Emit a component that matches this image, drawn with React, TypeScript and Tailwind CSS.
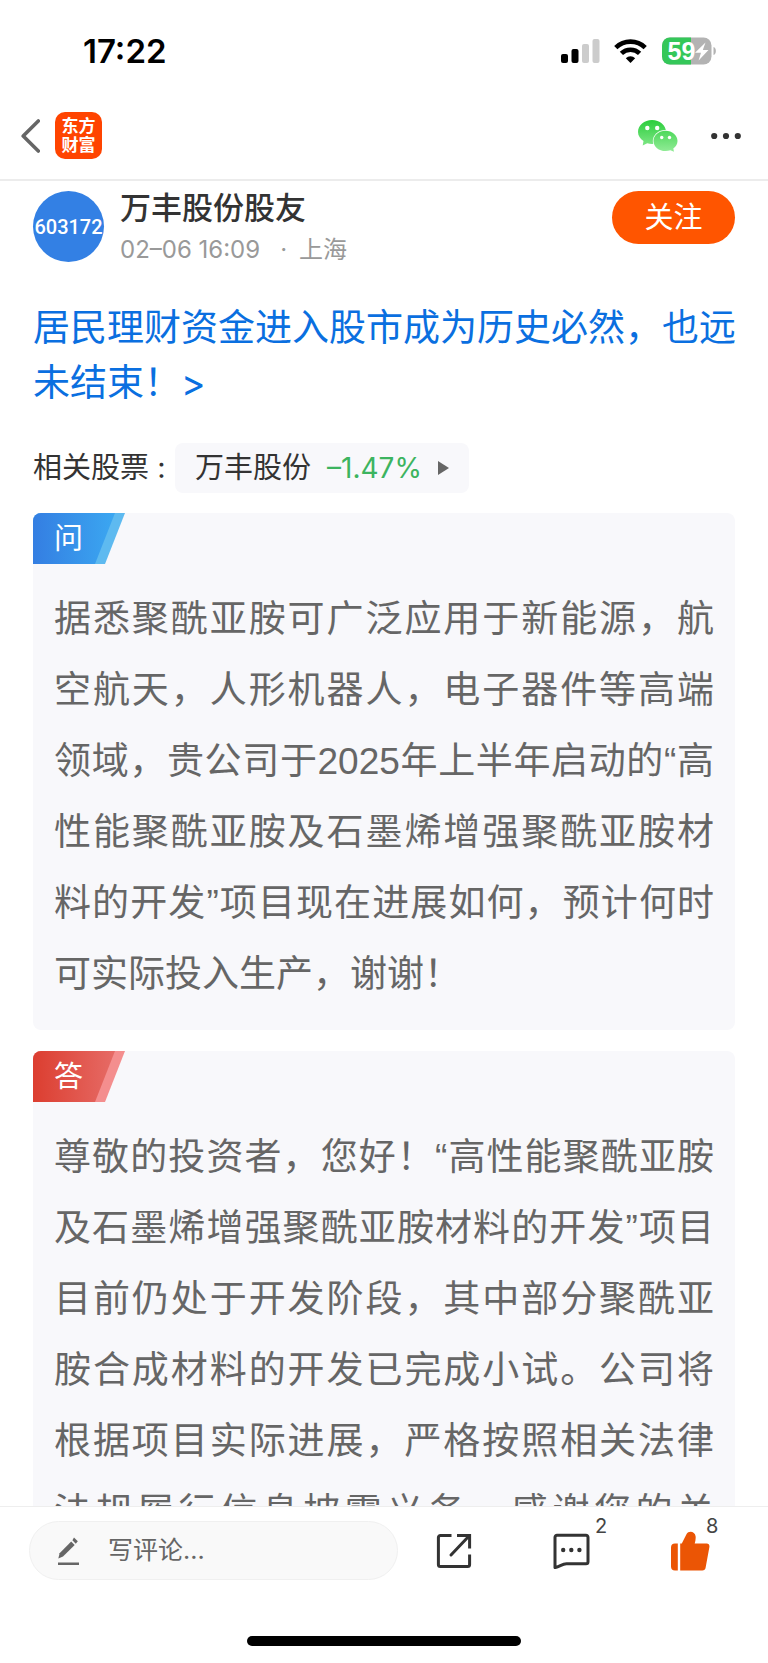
interface QaCardProps {
  tag: string;
  kind: "question" | "answer";
  text: string;
}

const question =
  "据悉聚酰亚胺可广泛应用于新能源，航空航天，人形机器人，电子器件等高端领域，贵公司于2025年上半年启动的“高性能聚酰亚胺及石墨烯增强聚酰亚胺材料的开发”项目现在进展如何，预计何时可实际投入生产，谢谢！";

const answer =
  "尊敬的投资者，您好！“高性能聚酰亚胺及石墨烯增强聚酰亚胺材料的开发”项目目前仍处于开发阶段，其中部分聚酰亚胺合成材料的开发已完成小试。公司将根据项目实际进展，严格按照相关法律法规履行信息披露义务。感谢您的关注！";

function StatusBar() {
  return (
    <div className="flex h-[92px] items-center justify-between pt-[10px] pr-[51px] pl-[83px]">
      <span className="text-[33px] leading-none font-semibold text-black">17:22</span>
      <div className="flex items-center">
        <svg className="h-6 w-[39px]" viewBox="0 0 39 24" aria-hidden="true">
          <rect x="0" y="15" width="7" height="9" rx="2" fill="#000" />
          <rect x="10.5" y="10" width="7" height="14" rx="2" fill="#000" />
          <rect x="21" y="5" width="7" height="19" rx="2" fill="#ccc" />
          <rect x="31.5" y="0" width="7" height="24" rx="2" fill="#ccc" />
        </svg>
        <svg className="ml-[14px] h-6 w-[33px]" viewBox="0 0 33 24" aria-hidden="true">
          <g fill="none" stroke="#000" strokeWidth="4.6">
            <path d="M1.8 8.6a21 21 0 0 1 29.4 0" />
            <path d="M7.4 14.4a13 13 0 0 1 18.2 0" />
          </g>
          <path d="M11.8 19.2a6.8 6.8 0 0 1 9.4 0L16.5 24z" fill="#000" />
        </svg>
        <svg className="ml-[15px] h-7 w-[55px]" viewBox="0 0 55 28" aria-label="59%">
          <defs>
            <clipPath id="battery">
              <rect y="0.5" width="49.5" height="27" rx="8" />
            </clipPath>
          </defs>
          <g clipPath="url(#battery)">
            <rect width="50" height="28" fill="#b3b3b3" />
            <rect width="29" height="28" fill="#34c759" />
          </g>
          <path d="M51.5 10c3.2 1 3.2 7 0 8z" fill="#b3b3b3" />
          <text x="5.5" y="23" fontSize="25" fontWeight="700" fill="#fff" fontFamily="Liberation Sans">
            59
          </text>
          <path d="M43.5 5.5 33 15.7h6l-2.4 7.8 9.9-10.4h-5.7z" fill="#fff" />
        </svg>
      </div>
    </div>
  );
}

function NavBar() {
  return (
    <header className="flex h-[89px] items-center border-b-2 border-[#ececec] pr-[27px] pl-[21px]">
      <button type="button" aria-label="返回">
        <svg className="h-[34px] w-[19px]" viewBox="0 0 19 34" fill="none" aria-hidden="true">
          <path d="M17.3 2 2.2 17l15.1 15" stroke="#666" strokeWidth="3.6" strokeLinecap="round" strokeLinejoin="round" />
        </svg>
      </button>
      <a
        href="#"
        className="ml-[15px] flex h-[47px] w-[47px] flex-col items-center justify-center rounded-[10px] bg-[#ff4400] text-[17px] leading-[19px] font-bold text-white"
      >
        <span>东方</span>
        <span>财富</span>
      </a>
      <div className="ml-auto flex items-center gap-[33px]">
        <button type="button" aria-label="微信">
          <svg className="h-8 w-10" viewBox="0 0 40 32" aria-hidden="true">
            <defs>
              <linearGradient id="wechat" x1="0" y1="0" x2="0" y2="32" gradientUnits="userSpaceOnUse">
                <stop offset="0" stopColor="#2bce3c" />
                <stop offset="1" stopColor="#93ec98" />
              </linearGradient>
            </defs>
            <path
              d="M14 0c7.8 0 14 5.3 14 12s-6.2 12-14 12c-1.7 0-3.4-.25-4.8-.7L4.7 25.4l.8-4.3C2.2 18.9 0 15.7 0 12 0 5.3 6.3 0 14 0z"
              fill="url(#wechat)"
            />
            <ellipse cx="27.5" cy="21" rx="12.7" ry="11" fill="#fff" />
            <path
              d="M27.5 10.8c6.6 0 12 4.5 12 10.1 0 3-1.7 5.7-4.2 7.5l.7 3.4-3.6-1.5c-1.5.5-3.2.7-4.9.7-6.6 0-12-4.5-12-10.1s5.4-10.1 12-10.1z"
              fill="url(#wechat)"
            />
            <g fill="#fff">
              <circle cx="9.3" cy="8" r="2.2" />
              <circle cx="19.2" cy="8" r="2.2" />
              <circle cx="23.7" cy="17.5" r="1.7" />
              <circle cx="31.5" cy="17.5" r="1.7" />
            </g>
          </svg>
        </button>
        <button type="button" aria-label="更多">
          <svg className="h-[30px] w-[30px]" viewBox="0 0 30 30" fill="#333" aria-hidden="true">
            <circle cx="3.2" cy="15" r="3.1" />
            <circle cx="15" cy="15" r="3.1" />
            <circle cx="26.8" cy="15" r="3.1" />
          </svg>
        </button>
      </div>
    </header>
  );
}

function QaCard({ tag, kind, text }: QaCardProps) {
  const isQuestion = kind === "question";

  return (
    <section className="mb-[21px] overflow-hidden rounded-lg bg-[#f8f8fb] pb-5">
      <div className="relative h-[51px] w-[92px]">
        <svg className="absolute inset-0 h-full w-full" viewBox="0 0 92 51" aria-hidden="true">
          <defs>
            <linearGradient id={kind} x1="0" y1="0" x2="1" y2="0">
              <stop offset="0" stopColor={isQuestion ? "#347ee2" : "#dc3e30"} />
              <stop offset="1" stopColor={isQuestion ? "#3ba7f1" : "#e66b66"} />
            </linearGradient>
          </defs>
          <path d="M0 0h92L72 51H0z" fill={isQuestion ? "#5ebaf0" : "#f48e8e"} />
          <path d="M0 0h82L62 51H0z" fill={`url(#${kind})`} />
        </svg>
        <h2 className="relative pl-[21px] text-[29px] leading-[51px] font-normal text-white">{tag}</h2>
      </div>
      <p className="mt-5 px-[21px] text-justify font-['Liberation_Sans','Noto_Sans_CJK_SC',sans-serif] text-[37px] leading-[71px] text-[#666]">
        {text}
      </p>
    </section>
  );
}

function CommentBar() {
  return (
    <footer className="shrink-0 border-t border-[#eee] bg-white">
      <div className="flex items-center pt-[14px] pr-[58px] pl-[29px]">
        <label className="flex h-[59px] min-w-0 flex-1 items-center rounded-full border border-[#f0f0f0] bg-[#f9f9f9] pl-7">
          <svg className="h-7 w-[21px] shrink-0" viewBox="0 0 21 28" fill="#666" aria-hidden="true">
            <path d="M13.2 4.6 16.7 8 5 19.6.3 21.5l1.3-5.2z" />
            <path d="M14.4 3.3 16 .6l3.8 3.6-2 2.6z" />
            <rect y="25.5" width="21" height="2.5" />
          </svg>
          <input
            type="text"
            aria-label="写评论"
            placeholder="写评论..."
            className="ml-[29px] w-full min-w-0 bg-transparent text-[25px] outline-none placeholder:text-[#666]"
          />
        </label>
        <button type="button" aria-label="分享" className="ml-[38px]">
          <svg className="h-[36px] w-[36px]" viewBox="0 0 36 36" fill="none" stroke="#333" strokeWidth="3" aria-hidden="true">
            <path d="M15.5 2.4H4.4a2 2 0 0 0-2 2v27.2a2 2 0 0 0 2 2h27.2a2 2 0 0 0 2-2V21.5" />
            <path d="M21 2.4h12.6v13.1" />
            <path d="M33 3 15 22" strokeLinecap="round" />
          </svg>
        </button>
        <button type="button" aria-label="评论" className="relative ml-[81px]">
          <svg className="h-[36px] w-[37px]" viewBox="0 0 37 36" aria-hidden="true">
            <path
              d="M4 2.2h29a2 2 0 0 1 2 2v24.6a2 2 0 0 1-2 2H13.5C9 30.8 6.5 34 2 34.6V4.2a2 2 0 0 1 2-2z"
              fill="none"
              stroke="#333"
              strokeWidth="3"
              strokeLinejoin="round"
            />
            <g fill="#333">
              <circle cx="10.2" cy="17" r="2.2" />
              <circle cx="18.3" cy="17" r="2.2" />
              <circle cx="26.4" cy="17" r="2.2" />
            </g>
          </svg>
          <span className="absolute -top-[19px] left-[42px] text-[20px] leading-6 text-[#444]">2</span>
        </button>
        <button type="button" aria-label="点赞" className="relative ml-[81px]">
          <svg className="h-[40px] w-[39px]" viewBox="0 0 39 40" fill="#eb5505" aria-hidden="true">
            <path d="M6.8 12.6v27H4a4 4 0 0 1-4-4v-19a4 4 0 0 1 4-4z" />
            <path d="M9.2 39.6v-27h1.6L15.6 3C17.5-.8 24 0 24.6 5.2c.3 2.6-.2 5-.9 7.4h12c2 0 3 1.5 2.7 3.4l-3.8 20.8a3.4 3.4 0 0 1-3.3 2.8z" />
          </svg>
          <span className="absolute -top-[17px] left-[35px] text-[20px] leading-6 text-[#444]">8</span>
        </button>
      </div>
      <div className="flex justify-center pt-14 pb-[17px]">
        <div className="h-[10px] w-[274px] rounded-full bg-black" />
      </div>
    </footer>
  );
}

export default function App() {
  return (
    <div className="flex h-screen flex-col bg-white font-['Inter','Noto_Sans_CJK_SC',sans-serif]" lang="zh-CN">
      <StatusBar />
      <NavBar />

      <main className="min-h-0 flex-1 overflow-hidden px-[33px] pt-[10px]">
        {/* Author */}
        <div className="flex items-start">
          <div className="flex h-[71px] w-[71px] items-center justify-center rounded-full bg-[#3380e4] font-['Roboto',sans-serif] text-[20px] font-medium text-white">
            603172
          </div>
          <div className="ml-4 pt-px">
            <h3 className="text-[31px] leading-8 font-medium text-[#333]">万丰股份股友</h3>
            <p className="mt-[10px] flex text-[24px] leading-8 text-[#999]">
              <span>02–06 16:09</span>
              <span className="ml-5">·</span>
              <span className="ml-3">上海</span>
            </p>
          </div>
          <button type="button" className="ml-auto h-[53px] w-[123px] rounded-full bg-[#ff5500] text-[29px] text-white">
            关注
          </button>
        </div>

        <h1 className="-mr-px mt-[34px] text-[37px] leading-[55px] text-[#0a6fe0]">
          <a href="#">居民理财资金进入股市成为历史必然，也远未结束！&gt;</a>
        </h1>

        {/* Related stock */}
        <div className="mt-[33px] flex items-center text-[29px] text-[#333]">
          <span className="w-[142px]">相关股票 :</span>
          <a href="#" className="flex h-[50px] items-center rounded-lg bg-[#f8f8fb] px-5">
            <span>万丰股份</span>
            <span className="ml-4 text-[28px] text-[#3cb45f]">–1.47%</span>
            <svg className="ml-4 h-[14px] w-[11px]" viewBox="0 0 11 14" fill="#666" aria-hidden="true">
              <path d="M0 0l11 7-11 7z" />
            </svg>
          </a>
        </div>

        <div className="mt-5">
          <QaCard kind="question" tag="问" text={question} />
          <QaCard kind="answer" tag="答" text={answer} />
        </div>
      </main>

      <CommentBar />
    </div>
  );
}
